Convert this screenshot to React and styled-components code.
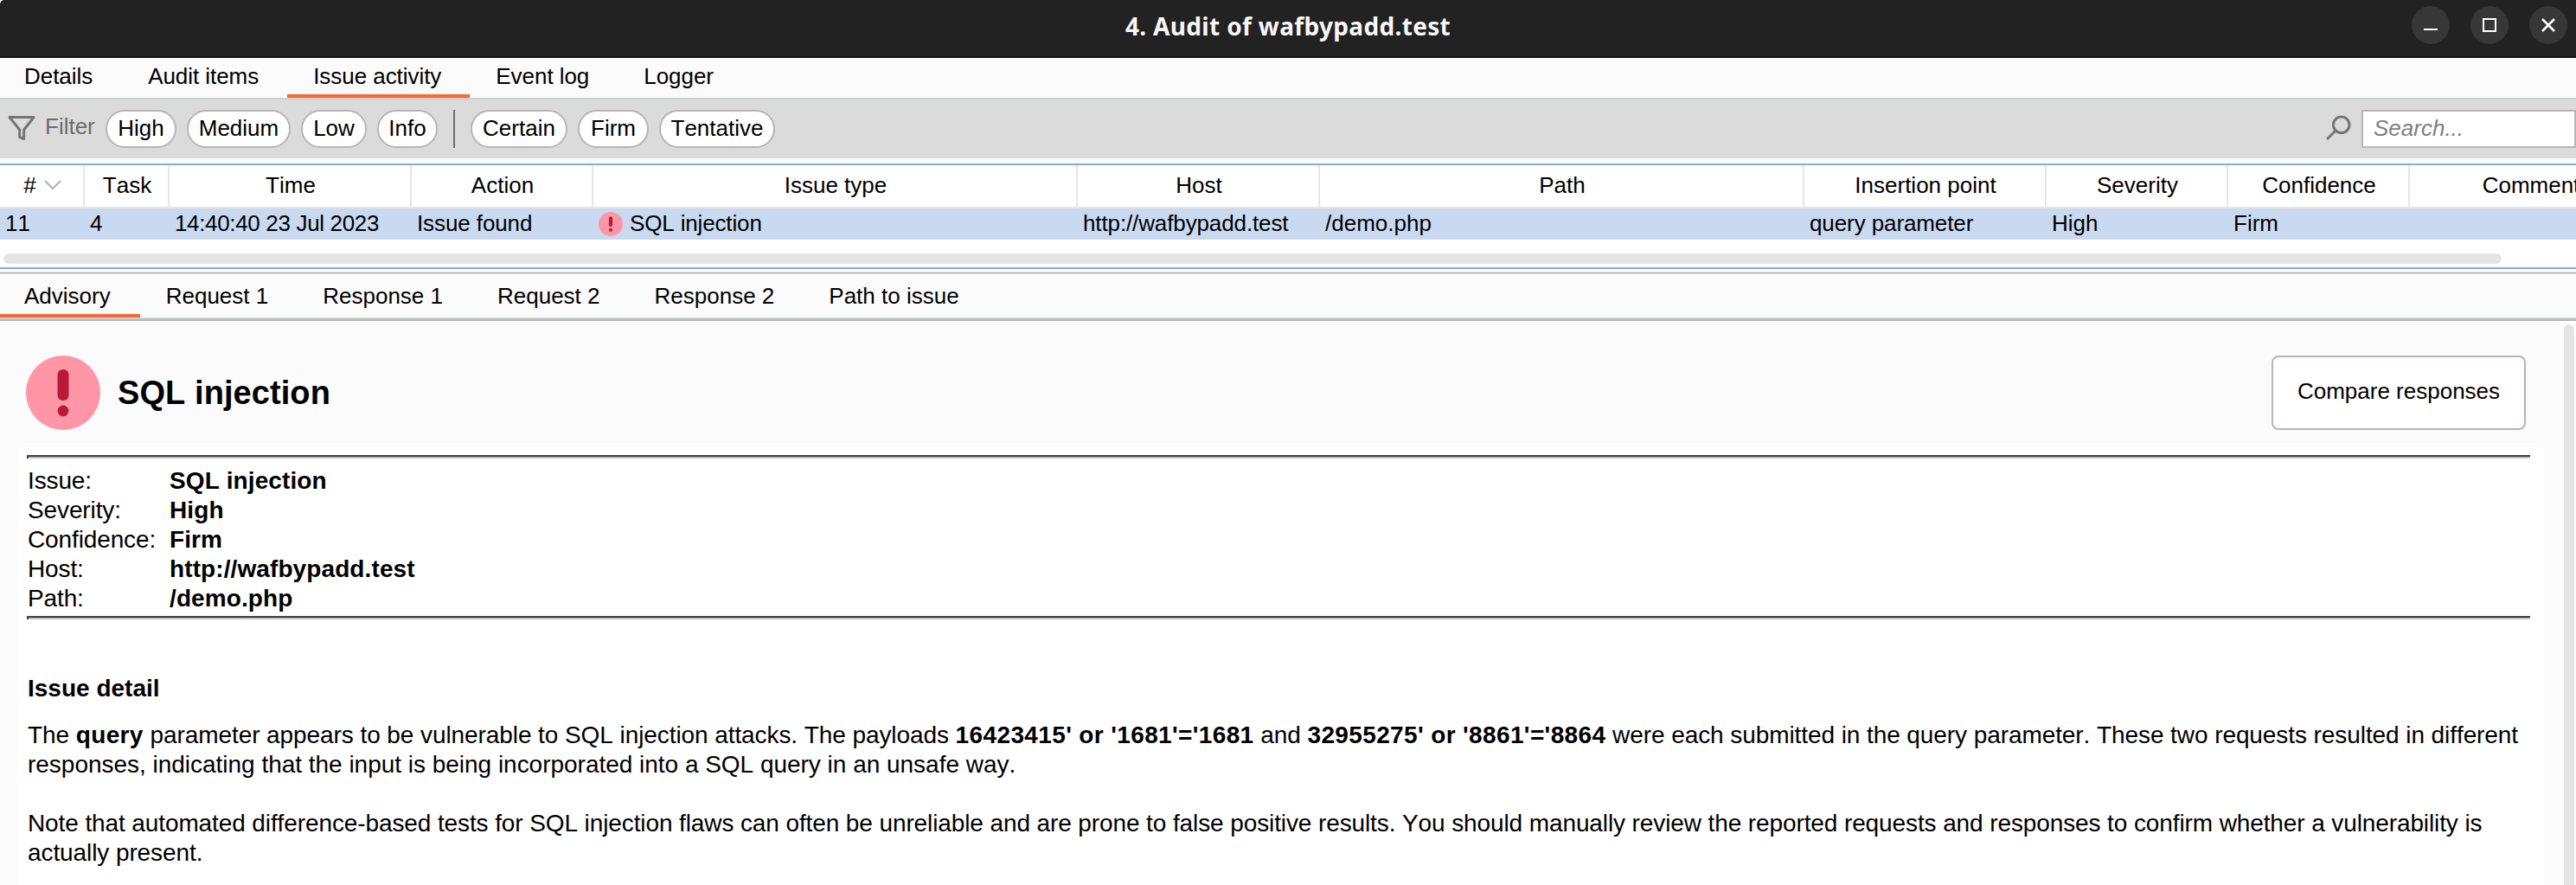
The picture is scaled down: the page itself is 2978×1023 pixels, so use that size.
import React from 'react';
import styled, { createGlobalStyle } from 'styled-components';

const Global = createGlobalStyle`
  *, *::before { box-sizing: border-box; }
  body { margin: 0; background: #fbfbfb; overflow: hidden; }
`;

const Window = styled.div`
  width: 2978px;
  height: 1023px;
  display: flex;
  flex-direction: column;
  overflow: hidden;
  background: #fbfbfb;
  color: #000;
  font-family: "Liberation Sans", Arial, sans-serif;
  font-size: 26px;
  line-height: 30px;
  font-kerning: none;
`;

const TitleBar = styled.header`
  height: 67px;
  flex: none;
  display: grid;
  grid-template-columns: 1fr auto 1fr;
  background: #222222;
  border-bottom: 2px solid #161214;
  border-top-left-radius: 5px;
`;

const Title = styled.h1`
  grid-column: 2;
  margin: 0;
  padding-top: 11px;
  color: #f7f7f7;
  font: 700 28px/38px "Noto Sans", sans-serif;
  letter-spacing: 0.34px;
`;

const WindowButtons = styled.div`
  display: flex;
  justify-content: flex-end;
  gap: 24px;
  padding: 7px 10px 0 0;
`;

const WindowButton = styled.button`
  width: 44px;
  height: 44px;
  padding: 0;
  border: 0;
  border-radius: 50%;
  background: #373737;
  svg { display: block; }
`;

const TabBar = styled.nav`
  height: 48px;
  flex: none;
  display: flex;
  border-bottom: 2px solid #ccd2cf;
`;

const Tab = styled.button`
  height: 46px;
  padding: 0 33px 0 30px;
  border: 0;
  border-bottom: 4px solid ${(p) => (p.$active ? '#ff6633' : 'transparent')};
  background: none;
  color: #000;
  font: inherit;
  font-kerning: none;
  letter-spacing: ${(p) => p.$tracking || 0}px;
  white-space: nowrap;
  &:first-child { padding: 0 34px 0 28px; }
`;

const FilterBar = styled.div`
  height: 68px;
  flex: none;
  display: flex;
  align-items: flex-start;
  padding: 12px 0 0 8px;
  background: #dbdbdb;
`;

const FilterLabel = styled.span`
  display: flex;
  gap: 10px;
  width: 114px;
  padding-top: 4px;
  color: #6c6c6c;
  svg { margin-top: 3px; }
`;

const Pill = styled.button`
  width: ${(p) => p.$width}px;
  height: 44px;
  margin-right: 12px;
  padding: 0 0 2px;
  border: 2px solid #bab4b4;
  border-radius: 22px;
  background: #fff;
  color: #000;
  font: inherit;
  font-kerning: none;
`;

const Divider = styled.i`
  width: 2px;
  height: 44px;
  margin: 0 18px 0 6px;
  background: #6c6c6c;
`;

const SearchGroup = styled.div`
  display: flex;
  gap: 12px;
  margin-left: auto;
  svg { margin-top: 6px; }
`;

const SearchField = styled.input`
  width: 248px;
  height: 44px;
  padding: 0 12px 2px;
  border: 2px solid #bab4b4;
  background: #fff;
  font: inherit;
  &::placeholder { color: #808080; font-style: italic; opacity: 1; }
`;

const TablePane = styled.section`
  height: 122px;
  flex: none;
  margin-top: 6px;
  border: solid #85abd8;
  border-width: 2px 0;
  background: #fff;
  overflow: hidden;
`;

const columns = '98px 98px 280px 210px 560px 280px 560px 280px 210px 210px 280px';

const HeaderRow = styled.div`
  display: grid;
  grid-template-columns: ${columns};
  height: 50px;
  border-bottom: 2px solid #e6e6e6;
`;

const HeaderCell = styled.div`
  display: flex;
  justify-content: center;
  align-items: center;
  gap: 9px;
  padding: 0 0 2px 2px;
  border-right: 2px solid #e6e6e6;
  white-space: nowrap;
`;

const DataRow = styled.div`
  display: grid;
  grid-template-columns: ${columns};
  height: 36px;
  background: #c9d9f0;
`;

const DataCell = styled.div`
  display: flex;
  align-items: center;
  gap: 8px;
  padding: 0 0 2px 6px;
  white-space: nowrap;
  letter-spacing: ${(p) => p.$tracking || 0}px;
  svg { margin-top: 2px; }
`;

const HScroll = styled.div`
  width: 2888px;
  height: 12px;
  margin: 16px 0 0 4px;
  border-radius: 6px;
  background: #e5e5e5;
`;

const Splitter = styled.div`
  height: 10px;
  flex: none;
  padding-top: 3px;
  background: #fff;
  &::before {
    content: '';
    display: block;
    height: 3px;
    border: solid #dcdada;
    border-width: 1px 0;
    background: #bab4b4;
  }
`;

const Advisory = styled.main`
  flex: 1;
  min-height: 0;
  display: flex;
  border-top: 2px solid #bab4b4;
`;

const Content = styled.div`
  width: 2960px;
  padding: 40px 20px 0;
`;

const IssueHeader = styled.div`
  display: flex;
  align-items: center;
  height: 86px;
  padding: 0 20px 0 10px;
`;

const IssueTitle = styled.h2`
  margin: 0 0 0 20px;
  font-size: 38px;
  line-height: 44px;
  letter-spacing: 0.08px;
`;

const CompareButton = styled.button`
  width: 294px;
  height: 86px;
  margin-left: auto;
  padding: 0 0 4px;
  border: 2px solid #bab4b4;
  border-radius: 8px;
  background: #fff;
  color: #000;
  font: inherit;
`;

const Report = styled.article`
  height: 520px;
  margin-top: 20px;
  padding: 9px 15px 0 11px;
  background: #fff;
  font-size: 28px;
  line-height: 34px;
`;

const Rule = styled.hr`
  height: 4px;
  margin: 0;
  border: 0;
  border-top: 2px solid #404040;
  border-left: 2px solid #404040;
  background: #c0c0c0;
`;

const Facts = styled.dl`
  display: grid;
  grid-template-columns: 164px 1fr;
  margin: 0;
  padding: 9px 0 3px 1px;
  dt { letter-spacing: -0.12px; }
  dd { margin: 0; font-weight: 700; letter-spacing: 0.1px; }
`;

const DetailHeading = styled.h3`
  margin: 63px 0 20px 1px;
  font-size: 28px;
  line-height: 34px;
`;

const Paragraph = styled.p`
  margin: 0 0 34px 1px;
  white-space: nowrap;
`;

const Line = styled.span`
  display: block;
  letter-spacing: ${(p) => p.$tracking || 0}px;
`;

const Payload = styled.b`
  letter-spacing: 0.37px;
`;

const VScroll = styled.div`
  flex: 1;
  padding: 4px 2px 0 4px;
  background: #fff;
  &::before {
    content: '';
    display: block;
    height: 700px;
    border-radius: 6px;
    background: #e5e5e5;
  }
`;

const AlertIcon = ({ size }) => (
  <svg width={size} height={size} viewBox="0 0 86 86">
    <circle cx="43" cy="43" r="43" fill="#ff96a7" />
    <rect x="36.5" y="16" width="13" height="36" rx="6" fill="#b91a37" />
    <circle cx="43" cy="64" r="6.4" fill="#b91a37" />
  </svg>
);

const tabs = ['Details', 'Audit items', 'Issue activity', 'Event log', 'Logger'];
const subTabs = ['Advisory', 'Request 1', 'Response 1', 'Request 2', 'Response 2', 'Path to issue'];
const severities = [['High', 82], ['Medium', 120], ['Low', 76], ['Info', 70]];
const confidences = [['Certain', 112], ['Firm', 82], ['Tentative', 134]];
const headers = ['#', 'Task', 'Time', 'Action', 'Issue type', 'Host', 'Path', 'Insertion point', 'Severity', 'Confidence', 'Comment'];
const row = ['11', '4', '14:40:40 23 Jul 2023', 'Issue found', 'SQL injection', 'http://wafbypadd.test', '/demo.php', 'query parameter', 'High', 'Firm', ''];
const tracking = { 2: -0.34, 3: -0.1, 4: -0.15, 5: -0.12, 7: -0.1 };
const facts = [
  ['Issue:', 'SQL injection'],
  ['Severity:', 'High'],
  ['Confidence:', 'Firm'],
  ['Host:', 'http://wafbypadd.test'],
  ['Path:', '/demo.php'],
];
const glyphs = ['M14 27h16', 'M15 15h14v14H15z', 'M15 15l14 14M29 15L15 29'];

export default function App() {
  return (
    <Window>
      <Global />
      <TitleBar>
        <Title>4. Audit of wafbypadd.test</Title>
        <WindowButtons>
          {glyphs.map((d, i) => (
            <WindowButton key={d}>
              <svg width="44" height="44" fill="none" stroke="#fff" strokeWidth={i === 2 ? 2.6 : 2}><path d={d} /></svg>
            </WindowButton>
          ))}
        </WindowButtons>
      </TitleBar>
      <TabBar>
        {tabs.map((t) => <Tab key={t} $active={t === 'Issue activity'} $tracking={-0.05}>{t}</Tab>)}
      </TabBar>
      <FilterBar>
        <FilterLabel>
          <svg width="34" height="30" fill="none" stroke="#757575" strokeWidth="3" strokeLinejoin="round">
            <path d="M3 1.5h28L19.7 16v10.5l-5-2V16z" />
          </svg>
          Filter
        </FilterLabel>
        {severities.map(([label, w]) => <Pill key={label} $width={w}>{label}</Pill>)}
        <Divider />
        {confidences.map(([label, w]) => <Pill key={label} $width={w}>{label}</Pill>)}
        <SearchGroup>
          <svg width="30" height="30" fill="none" stroke="#757575" strokeWidth="3" strokeLinecap="round">
            <circle cx="18.7" cy="11.3" r="9.3" />
            <path d="M11.8 18.2L3 27" />
          </svg>
          <SearchField placeholder="Search..." />
        </SearchGroup>
      </FilterBar>
      <TablePane>
        <HeaderRow>
          {headers.map((h) => (
            <HeaderCell key={h}>
              {h}
              {h === '#' && (
                <svg width="20" height="12" fill="none" stroke="#b0b0b0" strokeWidth="2"><path d="M1 1l9 9 9-9" /></svg>
              )}
            </HeaderCell>
          ))}
        </HeaderRow>
        <DataRow>
          {row.map((c, i) => (
            <DataCell key={headers[i]} $tracking={tracking[i]}>
              {i === 4 && <AlertIcon size={28} />}
              {c}
            </DataCell>
          ))}
        </DataRow>
        <HScroll />
      </TablePane>
      <Splitter />
      <TabBar>
        {subTabs.map((t) => <Tab key={t} $active={t === 'Advisory'}>{t}</Tab>)}
      </TabBar>
      <Advisory>
        <Content>
          <IssueHeader>
            <AlertIcon size={86} />
            <IssueTitle>SQL injection</IssueTitle>
            <CompareButton>Compare responses</CompareButton>
          </IssueHeader>
          <Report>
            <Rule />
            <Facts>
              {facts.map(([k, v]) => (
                <React.Fragment key={k}>
                  <dt>{k}</dt>
                  <dd>{v}</dd>
                </React.Fragment>
              ))}
            </Facts>
            <Rule />
            <DetailHeading>Issue detail</DetailHeading>
            <Paragraph>
              <Line $tracking={-0.08}>
                The <Payload>query</Payload> parameter appears to be vulnerable to SQL injection attacks. The payloads <Payload>16423415' or '1681'='1681</Payload> and <Payload>32955275' or '8861'='8864</Payload> were each submitted in the query parameter. These two requests resulted in different
              </Line>
              <Line $tracking={-0.02}>
                responses, indicating that the input is being incorporated into a SQL query in an unsafe way.
              </Line>
            </Paragraph>
            <Paragraph>
              <Line $tracking={-0.107}>
                Note that automated difference-based tests for SQL injection flaws can often be unreliable and are prone to false positive results. You should manually review the reported requests and responses to confirm whether a vulnerability is
              </Line>
              <Line $tracking={-0.09}>actually present.</Line>
            </Paragraph>
          </Report>
        </Content>
        <VScroll />
      </Advisory>
    </Window>
  );
}
